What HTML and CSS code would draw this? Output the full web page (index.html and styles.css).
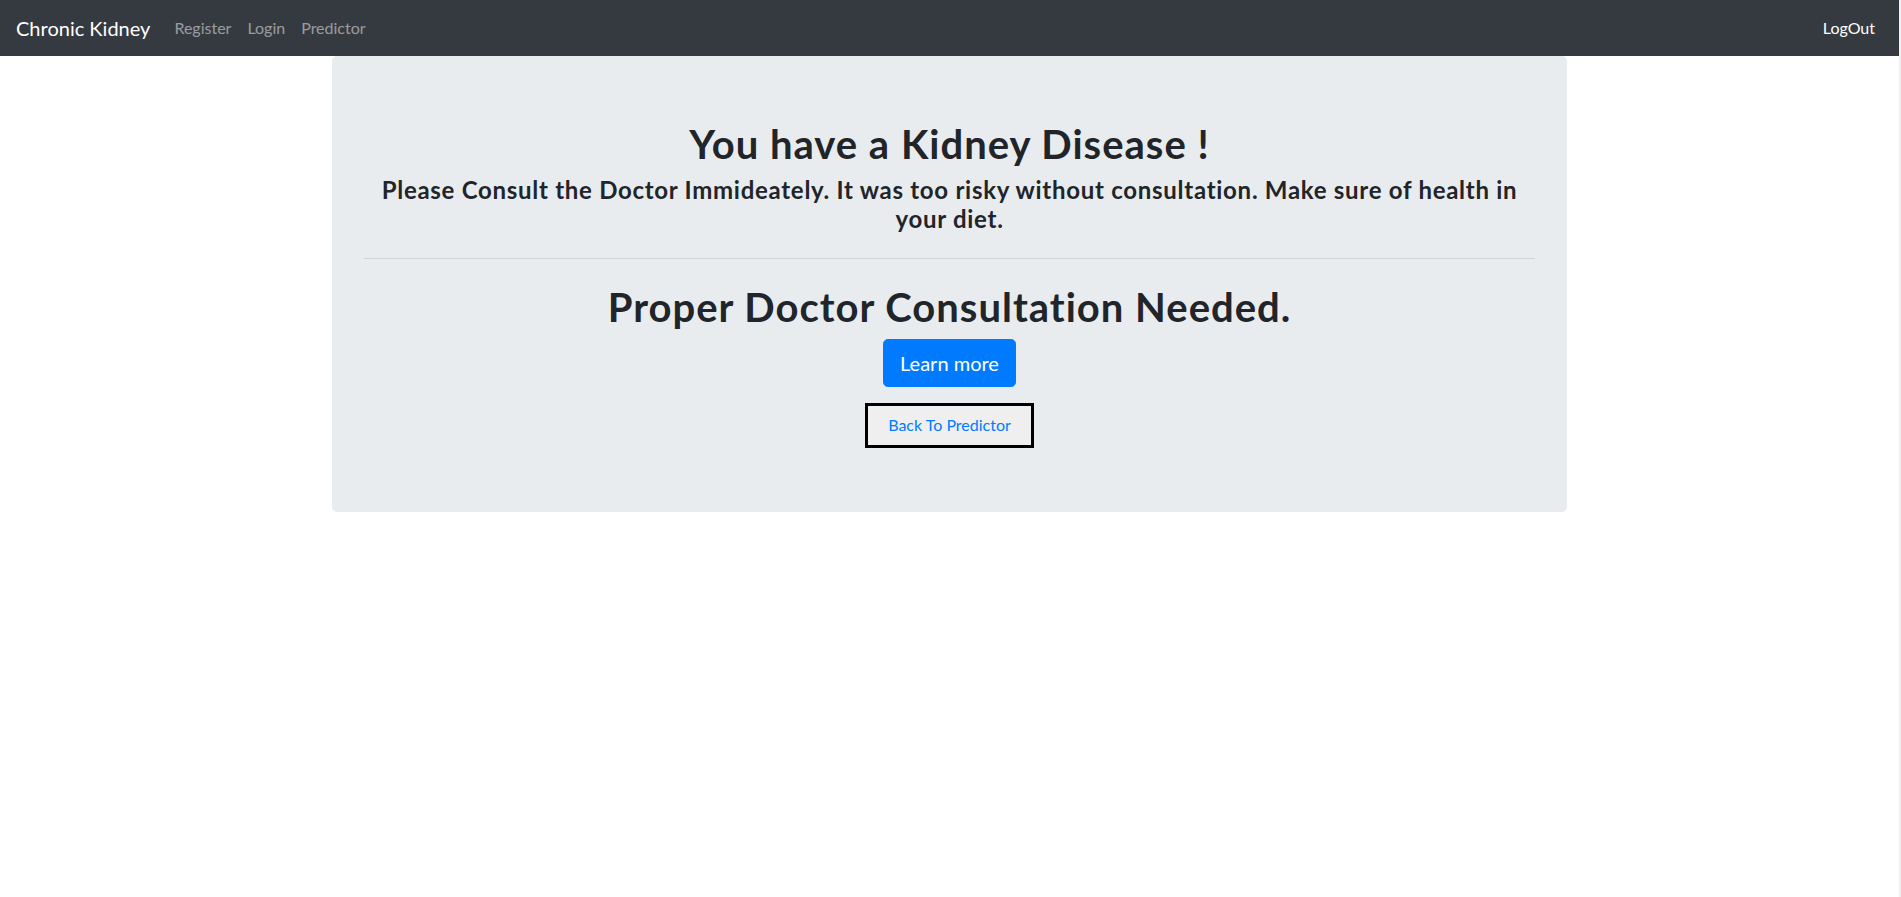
FILE: index.html
```html
<!DOCTYPE html>
<html lang="en">
<head>
<meta charset="utf-8">
<title>Chronic Kidney</title>
<link rel="stylesheet" href="styles.css">
</head>
<body>
<div class="page">
  <nav class="navbar">
    <a class="brand" href="#">Chronic Kidney</a>
    <ul class="nav-links">
      <li><a class="nav-link" href="#">Register</a></li>
      <li><a class="nav-link" href="#">Login</a></li>
      <li><a class="nav-link" href="#">Predictor</a></li>
    </ul>
    <ul class="nav-links nav-right">
      <li><a class="nav-link active" href="#">LogOut</a></li>
    </ul>
  </nav>
  <main class="jumbotron">
    <h1 class="title">You have a Kidney Disease !</h1>
    <h4 class="subtitle">Please Consult the Doctor Immideately. It was too risky without consultation. Make sure of health in your diet.</h4>
    <hr class="divider">
    <h1 class="title">Proper Doctor Consultation Needed.</h1>
    <div class="actions">
      <a class="btn-primary" href="#">Learn more</a>
      <button class="btn-back" type="button"><a href="#">Back To Predictor</a></button>
    </div>
  </main>
</div>
</body>
</html>
```

FILE: styles.css
```css
html, body {
  margin: 0;
  padding: 0;
  background: #fff;
}
body {
  font-family: Lato, "Open Sans", sans-serif;
  color: #212529;
  font-size: 16px;
  line-height: 1.5;
}
.page {
  margin-right: 2px;
  min-height: 897px;
  box-shadow: 2px 0 0 #f0f0f0;
}
.navbar {
  display: flex;
  align-items: center;
  height: 56px;
  padding: 0 16px;
  background: #343a40;
  box-sizing: border-box;
}
.brand {
  color: #fff;
  font-size: 20px;
  line-height: 30px;
  margin-right: 16px;
  text-decoration: none;
}
.nav-links {
  display: flex;
  list-style: none;
  margin: 0;
  padding: 0;
}
.nav-right {
  margin-left: auto;
}
.nav-link {
  display: block;
  padding: 8px;
  color: rgba(255, 255, 255, 0.5);
  text-decoration: none;
}
.nav-link.active {
  color: #fff;
}
.jumbotron {
  width: 1235px;
  box-sizing: border-box;
  margin: 0 auto;
  padding: 64px 32px;
  background: #e9ecef;
  border-radius: 4.8px;
  text-align: center;
}
.title {
  font-size: 40px;
  font-weight: 700;
  line-height: 1.2;
  letter-spacing: 0.025em;
  margin: 0 0 8px;
}
.subtitle {
  font-size: 24px;
  font-weight: 700;
  line-height: 1.2;
  letter-spacing: 0.03em;
  margin: 0 auto;
  max-width: 1140px;
}
.divider {
  margin: 24px 0;
  border: 0;
  border-top: 1px solid rgba(0, 0, 0, 0.1);
}
.actions {
  display: flex;
  flex-direction: column;
  align-items: center;
  gap: 16px;
}
.btn-primary {
  display: inline-block;
  padding: 8px 16px;
  font-size: 20px;
  line-height: 30px;
  color: #fff;
  background: #007bff;
  border: 1px solid #007bff;
  border-radius: 4.8px;
  text-decoration: none;
}
.btn-back {
  padding: 7.5px 20px;
  border: 3px solid #000;
  background: #efefef;
  font-family: inherit;
  font-size: 16px;
  line-height: 24px;
  border-radius: 0;
}
.btn-back a {
  color: #007bff;
  text-decoration: none;
}
```
